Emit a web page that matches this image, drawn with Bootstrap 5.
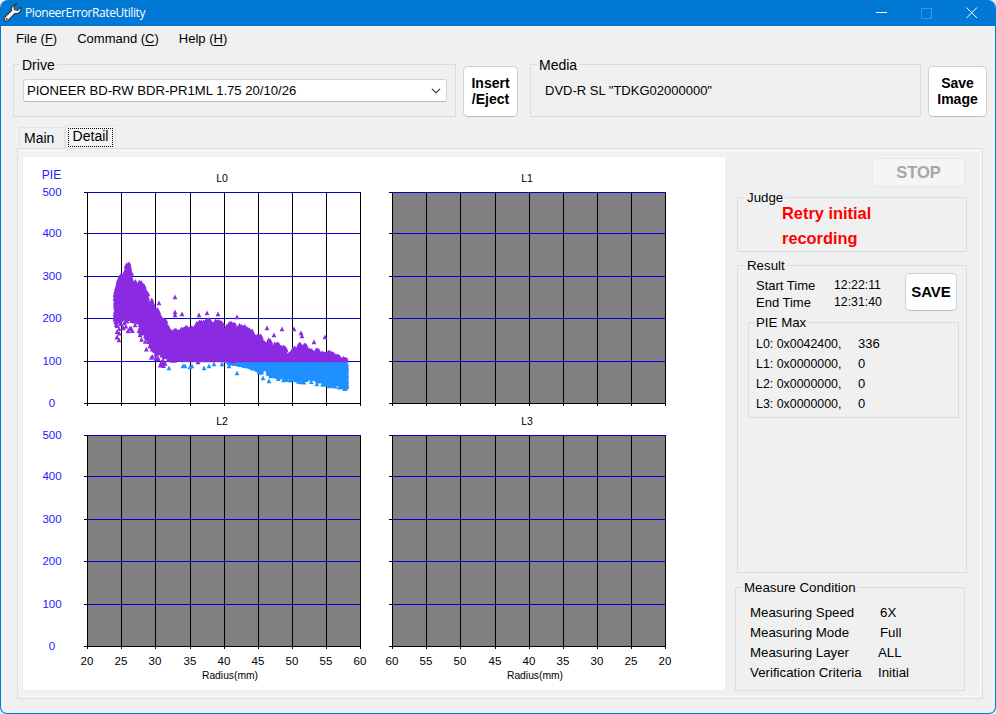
<!DOCTYPE html>
<html lang="en">
<head>
<meta charset="utf-8">
<title>PioneerErrorRateUtility</title>
<link href="https://cdn.jsdelivr.net/npm/bootstrap@5.3.0/dist/css/bootstrap.min.css" rel="stylesheet">
<style>
html,body{margin:0;width:996px;height:714px;overflow:hidden;background:#e8eef4;}
body{font-family:"Liberation Sans",Arial,sans-serif;font-size:13px;line-height:20px;color:#000;}
.app-win{width:996px;height:714px;background:#f0f0f0;border:1px solid #0078d4;border-top:0;border-radius:8px 8px 7px 7px;overflow:hidden;display:flex;flex-direction:column;}
.title-strip{height:26px;flex:none;background:#0078d4;color:#fff;font-family:"Open Sans",sans-serif;font-size:12px;letter-spacing:-.4px;padding-left:2px;}
.title-strip .win-ico{margin-right:2px;}
.win-ctl{width:45px;display:flex;justify-content:center;align-items:center;}
.win-ctls{margin-right:1px;}
.menu-strip{height:24px;flex:none;padding:2px 0 0 15px;gap:20px;align-items:center;}
.menu-strip a{color:#000;text-decoration:none;}
.menu-strip u{text-underline-offset:2px;}
.top-row{margin-top:6px;padding-left:12px;flex:none;}
fieldset.grp{border:1px solid #dcdcdc;display:block;flex:none;}
fieldset.grp>legend{float:none;width:auto;font-size:13.3px;line-height:16px;margin:0 0 0 7px;padding:0 2px;transform:translateY(1px);}
.grp-drive{width:443px;height:61px;padding:7px 8px 0 9px;}
fieldset.grp-drive>legend{font-size:14px;margin-left:-3px;}
.grp-media{width:391px;height:61px;margin-left:12px;padding:9px 0 0 14px;}
fieldset.grp-media>legend{font-size:14px;margin-left:-8px;}
.win-select.form-select{width:424px;height:23px;font-size:13.1px;line-height:20px;color:#000;padding:0 24px 0 3px;border:1px solid #d4d4d4;border-bottom-color:#b8b8b8;border-radius:3px;background-position:right 4px center;background-size:12px 10px;box-shadow:none;}
.win-btn.btn{background:#fff;border:1px solid #d0d0d0;border-bottom-color:#bbb;border-radius:5px;color:#000;font-weight:700;padding:0 0 1px;font-size:14px;line-height:16px;}
.btn-insert{width:55px;height:51px;margin:10px 0 0 7px;}
.btn-image{width:59px;height:51px;margin:10px 0 0 7px;}
.tabs-row{margin:8px 0 0 18px;height:23px;flex:none;border:0;gap:0;}
.tabs-row .nav-link{margin:0;padding:0 0 0 4px;height:21px;margin-top:2px;width:46px;text-align:left;font-size:14px;line-height:21px;background:#f0f0f0;color:#000;border:1px solid #e2e2e2;border-bottom:0;border-radius:0;}
.tabs-row .nav-link.active{margin-top:0;height:23px;width:51px;background:#f3f3f3;color:#000;padding:2px 2px 2px;line-height:16px;border-color:#e2e2e2;}
.focus-box{display:block;border:1px dotted #000;height:19px;line-height:15px;text-align:center;}
.tab-body{margin-left:16px;width:966px;height:551px;flex:none;border:1px solid #dedede;padding:8px 0 0 5px;background:#f0f0f0;box-shadow:inset 0 0 0 3px #f4f4f4;}
.chart-svg{display:block;flex:none;background:#fff;}
.side-col{width:232px;margin-left:10px;flex:none;}
.btn-stop.btn{width:93px;height:29px;margin:1px 0 0 137px;background:#f5f5f5;border:1px solid #e8e8e8;border-radius:4px;color:#a6a6a6;font-size:16.5px;line-height:27px;opacity:1;}
.grp-judge{width:230px;height:63px;margin:2px 0 0 2px;}
.judge-text{color:#f00;font-weight:700;font-size:16.4px;line-height:25px;margin:-4px 0 0 44px;}
.grp-result{width:230px;height:316px;margin:5px 0 0 2px;}
.time-col{padding:4px 0 0 18px;line-height:17px;}
.time-key{width:78px;}
.time-val{font-size:12.3px;}
.btn-save.btn{width:52px;height:38px;margin:0 9px 0 auto;font-size:15px;}
.grp-pie{width:211px;height:104px;margin:3px 0 0 10px;padding:4px 0 0 7px;}
fieldset.grp-pie>legend{margin-left:-2px;}
.pie-key{width:102px;font-size:12.4px;}
.grp-measure{width:230px;height:112px;margin:6px 0 0 0;padding:8px 0 0 14px;font-size:13.3px;}
fieldset.grp-measure>legend{margin-left:-8px;}
.meas-key{width:130px;}
.meas-key-b{width:128px;}
</style>
</head>
<body>
<div class="app-win">
  <header class="title-strip d-flex align-items-center">
    <svg class="win-ico" width="20" height="20" viewBox="0 0 18 18"><path d="M11.7 1.2c-2.4 0-4.3 2-4.1 4.4l.1 1.1-6 6.1c-.9.9-.9 2 0 2.9.9.9 2 .9 2.9 0l6.1-6.2 1.1.2c2.4.1 4.4-1.8 4.4-4.2 0-.6-.1-1.1-.3-1.6l-2.7 2.7-2.8-.7-.6-2.7 2.6-2.6c-.2-.2-.5-.3-.7-.3z" fill="#f4f4f4" stroke="#33373d" stroke-width="1"/><circle cx="3.3" cy="14.4" r=".9" fill="#444"/></svg>
    <span>PioneerErrorRateUtility</span>
    <div class="win-ctls d-flex ms-auto h-100">
      <span class="win-ctl"><svg width="11" height="2"><rect width="11" height="1" fill="#fff"/></svg></span>
      <span class="win-ctl"><svg width="11" height="11"><rect x=".5" y=".5" width="10" height="10" fill="none" stroke="#3d97de"/></svg></span>
      <span class="win-ctl"><svg width="12" height="12"><path d="M.5.5l10.5 10.5M11 .5L.5 11" stroke="#fff" fill="none"/></svg></span>
    </div>
  </header>
  <nav class="menu-strip d-flex">
    <a href="#">File (<u>F</u>)</a>
    <a href="#">Command (<u>C</u>)</a>
    <a href="#">Help (<u>H</u>)</a>
  </nav>
  <div class="top-row d-flex align-items-start">
    <fieldset class="grp grp-drive">
      <legend>Drive</legend>
      <select class="form-select win-select"><option>PIONEER BD-RW BDR-PR1ML 1.75 20/10/26</option></select>
    </fieldset>
    <button class="btn win-btn btn-insert">Insert<br>/Eject</button>
    <fieldset class="grp grp-media">
      <legend>Media</legend>
      <div>DVD-R SL "TDKG02000000"</div>
    </fieldset>
    <button class="btn win-btn btn-image">Save<br>Image</button>
  </div>
  <ul class="nav nav-tabs tabs-row">
    <li class="nav-item"><a class="nav-link" href="#">Main</a></li>
    <li class="nav-item"><a class="nav-link active" href="#"><span class="focus-box">Detail</span></a></li>
  </ul>
  <div class="tab-body d-flex">
    <svg class="chart-svg" id="chart" width="702" height="533" viewBox="23 157 702 533" font-family="Liberation Sans, Arial, sans-serif"></svg>
    <div class="side-col d-flex flex-column">
      <button class="btn win-btn btn-stop" disabled>STOP</button>
      <fieldset class="grp grp-judge">
        <legend>Judge</legend>
        <div class="judge-text">Retry initial<br>recording</div>
      </fieldset>
      <fieldset class="grp grp-result">
        <legend>Result</legend>
        <div class="d-flex">
          <div class="time-col">
            <div class="d-flex"><span class="time-key">Start Time</span><span class="time-val">12:22:11</span></div>
            <div class="d-flex"><span class="time-key">End Time</span><span class="time-val">12:31:40</span></div>
          </div>
          <button class="btn win-btn btn-save">SAVE</button>
        </div>
        <fieldset class="grp grp-pie">
          <legend>PIE Max</legend>
          <div class="d-flex"><span class="pie-key">L0: 0x0042400,</span><span>336</span></div>
          <div class="d-flex"><span class="pie-key">L1: 0x0000000,</span><span>0</span></div>
          <div class="d-flex"><span class="pie-key">L2: 0x0000000,</span><span>0</span></div>
          <div class="d-flex"><span class="pie-key">L3: 0x0000000,</span><span>0</span></div>
        </fieldset>
      </fieldset>
      <fieldset class="grp grp-measure">
        <legend>Measure Condition</legend>
        <div class="d-flex"><span class="meas-key">Measuring Speed</span><span>6X</span></div>
        <div class="d-flex"><span class="meas-key">Measuring Mode</span><span>Full</span></div>
        <div class="d-flex"><span class="meas-key-b">Measuring Layer</span><span>ALL</span></div>
        <div class="d-flex"><span class="meas-key-b">Verification Criteria</span><span>Initial</span></div>
      </fieldset>
    </div>
  </div>
</div>
<script src="https://cdn.jsdelivr.net/npm/bootstrap@5.3.0/dist/js/bootstrap.bundle.min.js"></script>
<script>
(function(){
var svg=document.getElementById('chart'),out='';
var xs=[0,34,68,103,137,171,205,239,273];
var hTop=[192,233,276,318,361,403],hLow=[435,476,519,561,604,646];
var yv=['500','400','300','200','100','0'];
function txt(x,y,s,sz,fill,a){out+='<text x="'+x+'" y="'+y+'" font-size="'+sz+'" fill="'+fill+'" text-anchor="'+(a||'middle')+'">'+s+'</text>';}
function plot(x0,hs,gray,title,labels,yLabels){
  var w=273,t=hs[0],b=hs[5];
  if(gray)out+='<rect x="'+x0+'" y="'+t+'" width="'+w+'" height="'+(b-t)+'" fill="#808080"/>';
  var g='<g shape-rendering="crispEdges" stroke-width="1">';
  xs.forEach(function(dx){var x=x0+dx+.5;g+='<line x1="'+x+'" x2="'+x+'" y1="'+t+'" y2="'+(b+3)+'" stroke="#000"/>';});
  hs.forEach(function(y,i){g+='<line x1="'+(x0-3)+'" x2="'+x0+'" y1="'+(y+.5)+'" y2="'+(y+.5)+'" stroke="#000"/>';
    g+='<line x1="'+x0+'" x2="'+(x0+w+1)+'" y1="'+(y+.5)+'" y2="'+(y+.5)+'" stroke="'+(i==5?'#000':'#0000d8')+'"/>';});
  out+=g+'</g>';
  txt(x0+135,hs[0]-10.5,title,10.5,'#000');
  if(yLabels)yv.forEach(function(s,i){txt(52,hs[i]+4,s,11.5,'#2020ff');});
  if(labels){
    xs.forEach(function(dx,i){txt(x0+dx,665,labels[i],11.5,'#000');});
    txt(x0+143,679,'Radius(mm)',10.3,'#000');
  }
}
var up=[20,25,30,35,40,45,50,55,60],dn=[60,55,50,45,40,35,30,25,20];
txt(51.5,178.5,'PIE',12,'#2020ff');
plot(87,hTop,false,'L0',null,true);
plot(392,hTop,true,'L1',null,false);
plot(87,hLow,true,'L2',up,true);
plot(392,hLow,true,'L3',dn,false);

var seed=12345;function R(){seed=(seed*16807)%2147483647;return (seed-1)/2147483646;}
function lerp(p,x){for(var i=1;i<p.length;i++){if(x<=p[i][0]){var a=p[i-1],b=p[i];return a[1]+(b[1]-a[1])*(x-a[0])/(b[0]-a[0]);}}return p[p.length-1][1];}
var upper=[[113,298],[116,288],[120,272],[124,274],[127,262],[130,263],[133,280],[140,278],[148,291],[155,306],[163,316],[170,326],[178,329],[190,326],[200,321],[207,319],[220,320],[232,322],[243,325],[257,334],[270,340],[283,346],[290,352],[300,342],[305,344],[323,350],[335,354],[343,358],[348,362]];
var lowerP=[[113,320],[117,326],[122,318],[137,320],[143,332],[153,350],[163,356],[172,359],[190,361],[348,361]];
var lowerB=[[225,364],[250,368],[260,372],[280,379],[300,381],[320,384],[340,387],[348,389]];
var jag={};for(var q=100;q<360;q+=3)jag[q]=R()*R()*9;
function jagAt(x){return jag[100+Math.floor((x-100)/3)*3]||0;}
var bp='',pp='';
function tri(x,y){return 'M'+x.toFixed(1)+' '+(y-2.4).toFixed(1)+'l2.4 4.6h-4.8z';}
var i,x,y,u,l;
for(i=0;i<3000;i++){x=226+R()*122;l=lerp(lowerB,x)-jagAt(x)*.7;y=360+R()*(l-360)-1;bp+=tri(Math.min(x,346.6),y);}
for(i=0;i<30;i++){x=250+R()*97;l=lerp(lowerB,x);y=l-1+R()*2;bp+=tri(Math.min(x,346.6),y);}
[[169,368],[183,366],[185,366],[192,366],[190,367],[204,368],[222,364],[229,366],[237,373],[263,378],[269,381],[209,366],[214,364]].forEach(function(a){bp+=tri(a[0],a[1]);});
for(i=0;i<7500;i++){x=115+R()*232;u=lerp(upper,x)+jagAt(x);l=lerp(lowerP,x);y=u+R()*(l-u);pp+=tri(x,Math.min(y,360));}
for(i=0;i<45;i++){x=116+R()*60;l=lerp(lowerP,x);y=l+R()*12;pp+=tri(x,y);}
[[175,297],[175,312],[175,315],[182,314],[159,303],[267,328],[274,335],[282,329],[294,329],[301,333],[302,336],[314,342],[325,337],[218,314],[199,315],[207,313],[237,317],[119,340],[117,337],[123,328],[130,328],[135,325],[128,331],[140,335],[150,346],[156,352],[163,360],[168,360],[198,362],[233,361]].forEach(function(a){pp+=tri(a[0],a[1]);});
out+='<path d="'+bp+'" fill="#1e90ff"/><path d="'+pp+'" fill="#8a2be2"/>';
svg.innerHTML=out;
})();
</script>
</body>
</html>
